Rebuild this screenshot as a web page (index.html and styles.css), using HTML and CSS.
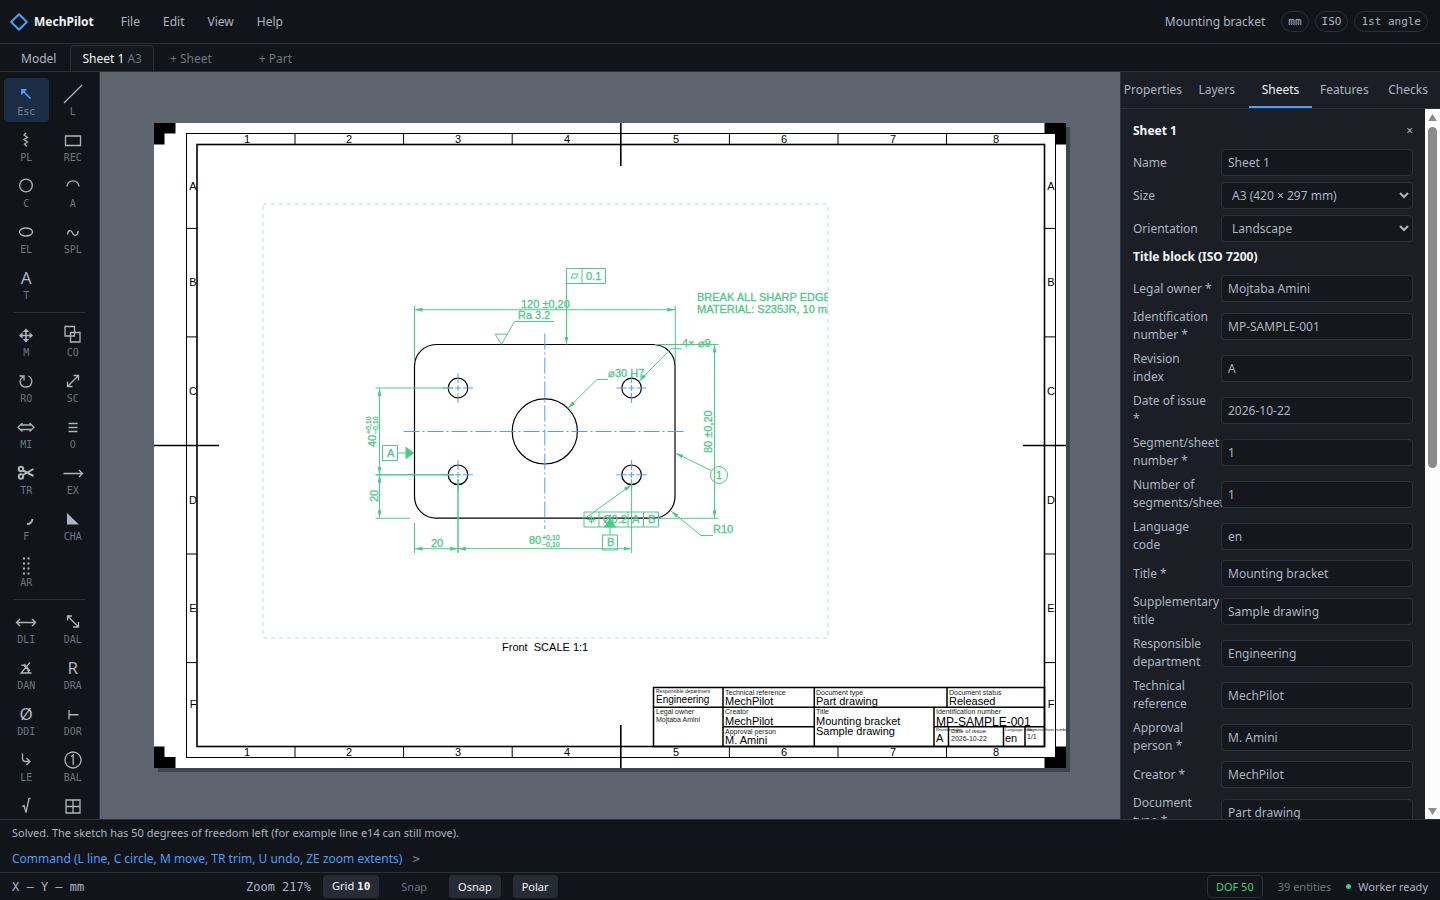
FILE: index.html
```html
<!DOCTYPE html>
<html lang="en">
<head>
<meta charset="utf-8">
<title>MechPilot</title>
<link rel="stylesheet" href="styles.css">
</head>
<body>
<div class="app">
  <header class="topbar">
    <svg class="logo" viewBox="0 0 20 20" aria-hidden="true"><path d="M10 2.2 17.8 10 10 17.8 2.2 10Z" fill="none" stroke="#4a9eff" stroke-width="2" stroke-linejoin="round"/></svg>
    <strong class="brand">MechPilot</strong>
    <nav class="menu">
      <button>File</button><button>Edit</button><button>View</button><button>Help</button>
    </nav>
    <span class="doc-name">Mounting bracket</span>
    <div class="pills"><span class="pill">mm</span><span class="pill">ISO</span><span class="pill">1st angle</span></div>
  </header>

  <nav class="sheet-tabs">
    <button class="sheet-tab">Model</button>
    <button class="sheet-tab current">Sheet 1 <span class="dim">A3</span></button>
    <button class="sheet-tab add">+ Sheet</button>
    <button class="sheet-tab add last">+ Part</button>
  </nav>

  <main class="workspace">
    <aside class="tools">
      <div class="tool-group">
        <button class="tool on"><svg viewBox="0 0 24 24"><path d="M9 9l7.500 7.500" stroke-width="1.600"/><path class="solid" d="M7 7h6l-1.500 2-2.500 2.500L7 13z"/></svg><span>Esc</span></button>
        <button class="tool"><svg viewBox="0 0 24 24"><path d="M3 21 21 3"/></svg><span>L</span></button>
        <button class="tool"><svg viewBox="0 0 24 24"><path d="M12 5l-2 2 3.500 2.500-3.500 2 3.500 2.500-3 2 2.500 2.500"/></svg><span>PL</span></button>
        <button class="tool"><svg viewBox="0 0 24 24"><path d="M4.500 8h15v9.500h-15z"/></svg><span>REC</span></button>
        <button class="tool"><svg viewBox="0 0 24 24"><circle cx="12" cy="11.500" r="6.300"/></svg><span>C</span></button>
        <button class="tool"><svg viewBox="0 0 24 24"><path d="M6 12.500C7 5 17 5 18 12.500"/></svg><span>A</span></button>
        <button class="tool"><svg viewBox="0 0 24 24"><ellipse cx="12" cy="12" rx="6.500" ry="4"/></svg><span>EL</span></button>
        <button class="tool"><svg viewBox="0 0 24 24"><path d="M6.500 14.500c.5-4.500 3.500-5 5-1.500s4.500 3.500 6-2"/></svg><span>SPL</span></button>
        <button class="tool"><b class="glyph">A</b><span>T</span></button>
      </div>
      <hr>
      <div class="tool-group">
        <button class="tool"><svg viewBox="0 0 24 24"><path d="M12 7v12M6 12.500h12" stroke-width="1.600"/><path class="solid" d="M12 5.500l3.200 3.500H8.800zM12 19.500l3.200-3.500H8.800zM5 12.500l3.500-3.200v6.400zM19 12.500l-3.500-3.200v6.400z"/></svg><span>M</span></button>
        <button class="tool"><svg viewBox="0 0 24 24"><path d="M4 3.500h9.500V13H4zM9.500 9.500H19V19H9.500z"/></svg><span>CO</span></button>
        <button class="tool"><svg viewBox="0 0 24 24"><path d="M14.500 7c6 4 3 11-2.500 11S3.500 12 9 8M5.500 7H10v4.500"/></svg><span>RO</span></button>
        <button class="tool"><svg viewBox="0 0 24 24"><path d="M6.500 17.500l11-11M12.500 6.500h5v5M6.500 12.500v5h5"/></svg><span>SC</span></button>
        <button class="tool"><svg viewBox="0 0 24 24"><path d="M7 10h10M7 14.500h10M8.500 8 4 12.250l4.500 4.250M15.500 8l4.500 4.250-4.500 4.250"/></svg><span>MI</span></button>
        <button class="tool"><svg viewBox="0 0 24 24"><path d="M7.500 8.500h9M7.500 12.500h9M7.500 16.500h9"/></svg><span>O</span></button>
        <button class="tool"><svg viewBox="0 0 24 24"><g stroke-width="2"><circle cx="7" cy="8" r="2.200"/><circle cx="7" cy="15.500" r="2.200"/><path d="M9 9.500l10.500 5.500M9 14l10.500-6"/></g></svg><span>TR</span></button>
        <button class="tool"><svg viewBox="0 0 24 24"><path d="M2.500 12.500h19M18 9l3.500 3.500L18 16"/></svg><span>EX</span></button>
        <button class="tool"><svg viewBox="0 0 24 24"><path d="M18.500 12c-.5 3.500-2 5-5.500 5" stroke-width="1.800"/></svg><span>F</span></button>
        <button class="tool"><svg viewBox="0 0 24 24"><path class="solid" d="M6 6v11.500h12z"/></svg><span>CHA</span></button>
        <button class="tool"><svg viewBox="0 0 24 24"><path d="M10 4.500v18M14.500 4.500v18" stroke-width="2" stroke-dasharray="2 3"/></svg><span>AR</span></button>
      </div>
      <hr>
      <div class="tool-group">
        <button class="tool"><svg viewBox="0 0 24 24"><path d="M3 12.500h18M6 9l-3.500 3.500L6 16M18 9l3.500 3.500L18 16"/></svg><span>DLI</span></button>
        <button class="tool"><svg viewBox="0 0 24 24"><path d="M6.500 6l11 11M11 6H6.500v4.500M17.500 12v5H12"/></svg><span>DAL</span></button>
        <button class="tool"><svg viewBox="0 0 24 24"><path d="M16 6.500 7 17h10.500M7.500 9c4 0 7 3.500 7 8M10 8l6 7"/></svg><span>DAN</span></button>
        <button class="tool"><b class="glyph">R</b><span>DRA</span></button>
        <button class="tool"><b class="glyph">Ø</b><span>DDI</span></button>
        <button class="tool"><svg viewBox="0 0 24 24"><path d="M8 8v9.500M8 12.750h9.500"/></svg><span>DOR</span></button>
        <button class="tool"><svg viewBox="0 0 24 24"><path d="M8.500 5.500v5q0 3 3 3H16M12.500 10l3.500 3.500-3.500 3.500"/></svg><span>LE</span></button>
        <button class="tool"><svg viewBox="0 0 24 24"><circle cx="12" cy="12" r="8"/><path d="M10 8.500l2.200-1.500v10"/></svg><span>BAL</span></button>
        <button class="tool"><svg viewBox="0 0 24 24"><path d="M8 12.500l2-1 2 7L15 4.500h1.500"/></svg></button>
        <button class="tool"><svg viewBox="0 0 24 24"><path d="M5 6h14v13H5zM12 6v13M5 12.500h14"/></svg></button>
      </div>
    </aside>

    <section class="canvas" aria-label="Drawing sheet">
      <svg class="drawing" viewBox="100 72 1020 747" role="img" aria-label="Sheet 1 drawing">
        <defs>
          <marker id="tip" viewBox="0 0 8 4" refX="8" refY="2" markerWidth="8" markerHeight="4" markerUnits="userSpaceOnUse" orient="auto-start-reverse"><path d="M0 0 8 2 0 4Z" fill="#4fc88b" stroke="none"/></marker>
          <clipPath id="view"><rect x="263" y="204" width="565" height="434"/></clipPath>
        </defs>
        <rect x="158" y="127" width="912" height="645" fill="#3f454d"/>
        <rect x="154" y="123" width="912" height="645" fill="#fff"/>

        <g fill="#000">
          <path d="M154 123h21.500v10.500h-11v11H154zM1066 123h-21.500v10.500h11v11h10.500zM154 768h21.500v-11h-11v-10.500H154zM1066 768h-21.500v-11h11v-10.500h10.500z"/>
        </g>
        <g fill="none" stroke="#000">
          <rect x="186.500" y="133.500" width="869" height="624"/>
          <rect x="197" y="144.500" width="847.500" height="602" stroke-width="1.600"/>
          <path d="M295 133.500v11M403.600 133.500v11M512.200 133.500v11M729.400 133.500v11M838 133.500v11M946.500 133.500v11M295 746.500v11M403.600 746.500v11M512.200 746.500v11M729.400 746.500v11M838 746.500v11M946.500 746.500v11"/>
          <path d="M186.500 228.400H197M186.500 336.900H197M186.500 554H197M186.500 662.600H197M1044.500 228.400h11M1044.500 336.900h11M1044.500 554h11M1044.500 662.600h11"/>
          <path d="M620.800 123v43M620.800 725v43M154 445.500h65M1023 445.500h43" stroke-width="1.600"/>
        </g>
        <g class="zone">
          <text x="247" y="143">1</text><text x="349" y="143">2</text><text x="458" y="143">3</text><text x="567" y="143">4</text><text x="676" y="143">5</text><text x="784" y="143">6</text><text x="893" y="143">7</text><text x="996" y="143">8</text>
          <text x="247" y="756">1</text><text x="349" y="756">2</text><text x="458" y="756">3</text><text x="567" y="756">4</text><text x="676" y="756">5</text><text x="784" y="756">6</text><text x="893" y="756">7</text><text x="996" y="756">8</text>
          <text x="193" y="190">A</text><text x="193" y="286">B</text><text x="193" y="395">C</text><text x="193" y="504">D</text><text x="193" y="612">E</text><text x="193" y="708">F</text>
          <text x="1051" y="190">A</text><text x="1051" y="286">B</text><text x="1051" y="395">C</text><text x="1051" y="504">D</text><text x="1051" y="612">E</text><text x="1051" y="708">F</text>
        </g>

        <rect x="263" y="204" width="565" height="434" fill="none" stroke="#b9d8fb" stroke-dasharray="4 4"/>

        <g fill="none" stroke="#000" stroke-width="1.200">
          <rect x="414.500" y="344.500" width="260.500" height="173.700" rx="21.700"/>
          <circle cx="544.800" cy="431.400" r="32.600"/>
          <circle cx="458" cy="388" r="9.800"/><circle cx="631.600" cy="388" r="9.800"/>
          <circle cx="458" cy="474.800" r="9.800"/><circle cx="631.600" cy="474.800" r="9.800"/>
        </g>
        <g fill="none" stroke="#4a9eff">
          <path d="M403.600 431.500H686M544.800 333.500V529" stroke-dasharray="16 3 2 3"/>
          <path d="M443 388h30M458 373v30M616.500 388h30M631.600 373v30M443 474.800h30M458 460v30M616.500 474.800h30M631.600 460v30" stroke-dasharray="10 2 6 2"/>
        </g>

        <g class="dims" clip-path="url(#view)">
          <path d="M414.500 305.500V362M675.300 305.500V362"/>
          <g marker-start="url(#tip)" marker-end="url(#tip)">
            <path d="M414.500 309.700H675.300"/>
            <path d="M714.500 344.500V518.300"/>
            <path d="M379.500 388V474.800"/>
            <path d="M379.500 474.800V518.300"/>
            <path d="M414.500 548.700H458"/>
            <path d="M458 548.700H631.600"/>
          </g>
          <path d="M655 344.500H718.500M655 518.300H718.500M375.500 388H453M375.500 518.300H410M414.500 523V553M631.600 479V553"/>
          <path d="M375.500 474.800H454M458 479V553" stroke-width="1.500"/>
          <g marker-end="url(#tip)">
            <path d="M566.500 268.500V344.500"/>
            <path d="M608 379.500H597L568 408.300"/>
            <path d="M682 348.700H671L639 381.300"/>
            <path d="M713 535.500H701L671 511"/>
            <path d="M711 470.500 675.300 453"/>
            <path d="M587 517 631.600 484.800"/>
          </g>
          <path d="M554 321.500H514.500L501.500 344.300 495.200 334.200H507.500"/>
          <path d="M566.500 268.500H605.500V283.500H566.500ZM582 268.500V283.500M571 278 573 274H578L576 278Z"/>
          <path d="M584 512H658.500V527H584ZM599 512V527M628 512V527M643.500 512V527M587.500 519.500H595.500M591.500 515.500V523.500"/>
          <circle cx="591.500" cy="519.500" r="2.500"/>
          <circle cx="719" cy="475" r="8.500"/>
          <path d="M382.500 445.500H397.500V460.500H382.500ZM397.500 453H406M602.500 535H617.500V550H602.500ZM610 535V526"/>
          <path class="solid" d="M405.500 446.500 414.500 453 405.500 459.500ZM603.500 527.500H616.500L610 518Z"/>
          <g class="note">
            <text x="521" y="308">120 ±0,20</text>
            <text x="518" y="319">Ra 3.2</text>
            <text x="586" y="280">0.1</text>
            <text x="697" y="301">BREAK ALL SHARP EDGES</text>
            <text x="697" y="313">MATERIAL: S235JR, 10 mm</text>
            <text x="682" y="347">4× ⌀9</text>
            <text x="608" y="377">⌀30 H7</text>
            <text x="713" y="533">R10</text>
            <text x="716" y="479">1</text>
            <text x="387" y="457">A</text>
            <text x="607" y="546">B</text>
            <text x="603" y="523">Ø0.2</text>
            <text x="632" y="523">A</text>
            <text x="648" y="523">B</text>
            <text x="431" y="547">20</text>
            <text x="529" y="544">80</text>
            <text x="376" y="447" transform="rotate(-90 376 447)">40</text>
            <text x="378" y="502" transform="rotate(-90 378 502)">20</text>
            <text x="712" y="453" transform="rotate(-90 712 453)">80 ±0,20</text>
          </g>
          <g class="tol">
            <text x="542" y="540">+0,10</text><text x="542" y="547">−0,10</text>
            <text x="371" y="434" transform="rotate(-90 371 434)">+0,10</text><text x="378" y="434" transform="rotate(-90 378 434)">−0,10</text>
          </g>
        </g>
        <text class="val" x="502" y="651" xml:space="preserve">Front  SCALE 1:1</text>

        <g fill="none" stroke="#000" stroke-width="1.500">
          <rect x="653.500" y="687.500" width="391" height="59"/>
          <path d="M653.500 707.300H1044.500M723 687.500V746.500M814.300 687.500V746.500M947 687.500V707.300M934 707.300V746.500M723 726.700H814.300M934 726.700H1044.500M948.500 726.700V746.500M1003.500 726.700V746.500M1025 726.700V746.500"/>
        </g>
        <g class="cap">
          <text class="tiny" x="656" y="693">Responsible department</text>
          <text x="725" y="695">Technical reference</text>
          <text x="816" y="695">Document type</text>
          <text x="949" y="695">Document status</text>
          <text x="656" y="714">Legal owner</text>
          <text x="656" y="722">Mojtaba Amini</text>
          <text x="725" y="714">Creator</text>
          <text x="816" y="714">Title</text>
          <text x="936" y="714">Identification number</text>
          <text x="725" y="734">Approval person</text>
          <text class="micro" x="936" y="731">Revision index</text>
          <text class="date" x="951" y="733">Date of issue</text>
          <text x="951" y="741">2026-10-22</text>
          <text class="micro" x="1005" y="731">Language code</text>
          <text class="micro" x="1027" y="731">Segment/sheet number</text>
          <text x="1027" y="739">1/1</text>
        </g>
        <g class="val">
          <text class="small" x="656" y="703">Engineering</text>
          <text x="725" y="705">MechPilot</text>
          <text x="816" y="705">Part drawing</text>
          <text x="949" y="705">Released</text>
          <text x="725" y="725">MechPilot</text>
          <text x="725" y="744">M. Amini</text>
          <text x="816" y="725">Mounting bracket</text>
          <text x="816" y="735">Sample drawing</text>
          <text class="big" x="936" y="726">MP-SAMPLE-001</text>
          <text x="936" y="742">A</text>
          <text x="1005" y="742">en</text>
        </g>
      </svg>
    </section>

    <aside class="panel">
      <div class="panel-tabs" role="tablist">
        <button role="tab">Properties</button><button role="tab">Layers</button><button role="tab" class="current" aria-selected="true">Sheets</button><button role="tab">Features</button><button role="tab">Checks</button>
      </div>
      <div class="panel-scroll">
        <form class="fields">
          <h2>Sheet 1 <button type="button" class="close" aria-label="Delete sheet">×</button></h2>
          <div class="field"><label for="f1">Name</label><input id="f1" value="Sheet 1"></div>
          <div class="field"><label for="f2">Size</label><div class="select"><select id="f2"><option>A3 (420 × 297 mm)</option></select><svg viewBox="0 0 10 7"><path d="M1 1l4 4 4-4"/></svg></div></div>
          <div class="field"><label for="f3">Orientation</label><div class="select"><select id="f3"><option>Landscape</option></select><svg viewBox="0 0 10 7"><path d="M1 1l4 4 4-4"/></svg></div></div>
          <h2>Title block (ISO 7200)</h2>
          <div class="field"><label for="f4">Legal owner *</label><input id="f4" value="Mojtaba Amini"></div>
          <div class="field"><label for="f5">Identification<br>number *</label><input id="f5" value="MP-SAMPLE-001"></div>
          <div class="field"><label for="f6">Revision<br>index</label><input id="f6" value="A"></div>
          <div class="field"><label for="f7">Date of issue<br>*</label><input id="f7" value="2026-10-22"></div>
          <div class="field"><label for="f8">Segment/sheet<br>number *</label><input id="f8" value="1"></div>
          <div class="field"><label for="f9">Number of<br>segments/sheets</label><input id="f9" value="1"></div>
          <div class="field"><label for="f10">Language<br>code</label><input id="f10" value="en"></div>
          <div class="field"><label for="f11">Title *</label><input id="f11" value="Mounting bracket"></div>
          <div class="field"><label for="f12">Supplementary<br>title</label><input id="f12" value="Sample drawing"></div>
          <div class="field"><label for="f13">Responsible<br>department</label><input id="f13" value="Engineering"></div>
          <div class="field"><label for="f14">Technical<br>reference</label><input id="f14" value="MechPilot"></div>
          <div class="field"><label for="f15">Approval<br>person *</label><input id="f15" value="M. Amini"></div>
          <div class="field"><label for="f16">Creator *</label><input id="f16" value="MechPilot"></div>
          <div class="field"><label for="f17">Document<br>type *</label><input id="f17" value="Part drawing"></div>
        </form>
        <div class="scrollbar" aria-hidden="true">
          <svg viewBox="0 0 10 8"><path d="M5 0 10 8H0Z"/></svg>
          <div class="track"><div class="thumb"></div></div>
          <svg viewBox="0 0 10 8"><path d="M5 8 10 0H0Z"/></svg>
        </div>
      </div>
    </aside>
  </main>

  <section class="console">
    <p>Solved. The sketch has 50 degrees of freedom left (for example line e14 can still move).</p>
    <div class="prompt"><label for="cmd">Command (L line, C circle, M move, TR trim, U undo, ZE zoom extents)</label><span class="caret">&gt;</span><input id="cmd"></div>
  </section>

  <footer class="status">
    <span class="coords">X — Y — mm</span>
    <span class="zoom">Zoom 217%</span>
    <button class="toggle on">Grid <b>10</b></button>
    <button class="toggle">Snap</button>
    <button class="toggle on">Osnap</button>
    <button class="toggle on">Polar</button>
    <button class="dof">DOF 50</button>
    <span class="count">39 entities</span>
    <span class="worker">Worker ready</span>
  </footer>
</div>
</body>
</html>
```
FILE: styles.css
```css
:root {
  --bg: #111418;
  --panel: #1b1f25;
  --field: #14171b;
  --line: #2b313a;
  --text: #adb5c0;
  --bright: #f2f5f8;
  --muted: #6b7682;
  --accent: #4a9eff;
  --green: #4fc88b;
  --mono: "DejaVu Sans Mono", "Liberation Mono", monospace;
}

* { box-sizing: border-box; }

body {
  margin: 0;
  background: var(--bg);
  color: var(--text);
  font: 12px/18px "Noto Sans", "Open Sans", sans-serif;
}

button, input, select { font: inherit; color: inherit; }
button { background: none; border: 0; padding: 0; }

.app { display: flex; flex-direction: column; height: 100vh; overflow: hidden; }

.topbar {
  display: flex;
  align-items: center;
  height: 44px;
  padding: 0 12px 0 9px;
  border-bottom: 1px solid var(--line);
}
.logo { width: 20px; height: 20px; }
.brand { margin-left: 5px; color: var(--bright); }
.menu { display: flex; gap: 23px; margin-left: 27px; flex: 1; }
.pills { display: flex; gap: 6px; margin-left: 16px; }
.pill {
  padding: 0 6px;
  border: 1px solid var(--line);
  border-radius: 11px;
  font: 11px/19px var(--mono);
}

.sheet-tabs {
  display: flex;
  height: 28px;
  padding: 1px 8px 0;
  border-bottom: 1px solid var(--line);
}
.sheet-tab { padding: 0 12px; border: 1px solid transparent; border-bottom: 0; }
.sheet-tab.current { margin-left: 1px; padding: 0 11px; color: var(--bright); background: #14181d; border-color: var(--line); border-radius: 4px 4px 0 0; }
.dim, .sheet-tab.add { color: var(--muted); }
.sheet-tab.add { margin-left: 3px; }
.sheet-tab.last { margin-left: 21px; }

.workspace { display: flex; flex: 1; min-height: 0; }

.tools {
  width: 100px;
  padding: 6px 4px 0;
  border-right: 1px solid var(--line);
  overflow: hidden;
}
.tools hr { margin: 6px 10px; border: 0; border-top: 1px solid var(--line); }
.tool-group { display: grid; grid-template-columns: 1fr 1fr; gap: 2px; }
.tool {
  display: flex;
  flex-direction: column;
  align-items: center;
  height: 44px;
  padding-top: 4px;
  border-radius: 4px;
}
.tool svg { width: 24px; height: 24px; flex: none; fill: none; stroke: currentColor; stroke-width: 1.3; }
.tool .solid { fill: currentColor; stroke: none; }
.tool .glyph { font-size: 17px; line-height: 24px; font-weight: 400; }
.tool span { color: var(--muted); font: 10px/11px var(--mono); }
.tool.on { background: #1b2d45; color: var(--accent); }
.tool.on span { color: #76818e; }

.canvas { flex: 1; min-width: 0; background: #5e656e; }
.drawing { display: block; width: 100%; height: 100%; font-family: "Liberation Sans", Arial, sans-serif; font-size: 11px; }
.zone { text-anchor: middle; }
.dims { fill: none; stroke: var(--green); }
.dims .solid { fill: var(--green); stroke: none; }
.dims text { fill: var(--green); stroke-width: 0.3; }
.tol { font-size: 7px; }
.cap { font-size: 7px; fill: #222; }
.cap .tiny { font-size: 5px; }
.cap .micro { font-size: 4px; }
.cap .date { font-size: 6px; }
.val .small { font-size: 10px; }
.val .big { font-size: 12px; }

.panel {
  display: flex;
  flex-direction: column;
  width: 320px;
  background: var(--panel);
  border-left: 1px solid var(--line);
}
.panel-tabs { display: grid; grid-template-columns: repeat(5, minmax(0, 1fr)); height: 37px; border-bottom: 1px solid var(--line); }
.panel-tabs button { display: flex; justify-content: center; align-items: center; padding-top: 2px; border-bottom: 2px solid transparent; }
.panel-tabs .current { color: var(--bright); border-color: var(--accent); }
.panel-scroll { display: flex; flex: 1; min-height: 0; }

.fields { display: flex; flex-direction: column; gap: 6px; flex: 1; min-width: 0; padding: 13px 12px 12px; overflow: hidden; }
.fields > * { flex: none; }
.fields h2 { display: flex; justify-content: space-between; margin: 0 0 3px; color: var(--bright); font-size: 12px; line-height: 18px; }
.close { color: var(--text); font-weight: 400; }
.field { display: grid; grid-template-columns: 80px minmax(0, 1fr); gap: 8px; align-items: center; }
.field label { white-space: nowrap; }
.field input, .field select {
  width: 100%;
  height: 27px;
  padding: 0 6px;
  background: var(--field);
  border: 1px solid var(--line);
  border-radius: 4px;
}
.field select { display: block; appearance: none; padding: 0 10px; }
.select { display: grid; align-items: center; }
.select > * { grid-area: 1 / 1; }
.select svg { width: 10px; height: 7px; margin-right: 4px; justify-self: end; fill: none; stroke: currentColor; stroke-width: 2; pointer-events: none; }

.scrollbar { display: flex; flex-direction: column; align-items: center; width: 15px; padding: 5px 0 4px; background: #fcfcfc; fill: #8b8b8b; }
.scrollbar svg { width: 9px; height: 7px; flex: none; }
.track { flex: 1; width: 9px; padding-top: 6px; }
.thumb { height: 50%; border-radius: 5px; background: #8b8b8b; }

.console { height: 53px; padding: 4px 12px 0; border-top: 1px solid var(--line); }
.console p { margin: 0; font-size: 11px; }
.prompt { display: flex; align-items: center; gap: 10px; margin-top: 8px; }
.prompt label { color: var(--accent); }
.caret { color: #76818e; font-family: var(--mono); }
.prompt input { flex: 1; height: 18px; padding: 0; background: none; border: 0; outline: 0; }

.status { display: flex; align-items: center; gap: 12px; height: 28px; padding: 0 12px; border-top: 1px solid var(--line); font-size: 11px; }
.coords, .zoom { font: 12px/18px var(--mono); }
.coords { width: 222px; }
.toggle { height: 23px; padding: 0 10px; border-radius: 4px; color: var(--muted); }
.toggle.on { padding: 0 9px; background: #262c35; color: var(--bright); }
.toggle b { font: bold 11px/18px var(--mono); }
.dof { height: 23px; margin-left: auto; padding: 0 8px; border: 1px solid var(--line); border-radius: 4px; color: #3fd07e; }
.count { color: var(--muted); margin-left: 3px; }
.worker { display: flex; align-items: center; gap: 7px; margin-left: 3px; }
.worker::before { content: ""; width: 5px; height: 5px; border-radius: 50%; background: var(--green); }
```
